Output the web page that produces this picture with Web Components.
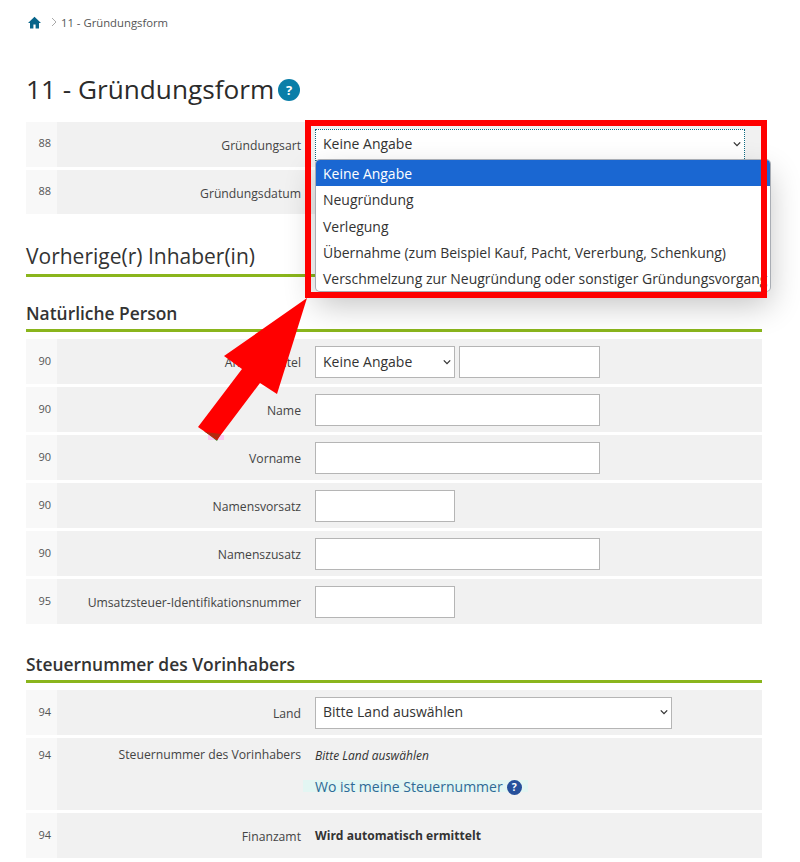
<!DOCTYPE html>
<html lang="de"><head><meta charset="utf-8"><title>Gründungsform</title>
<style>
html,body{margin:0;padding:0;background:#fff}
body{font-family:"Open Sans",sans-serif;color:#333;width:800px;height:862px;overflow:hidden;position:relative}
</style></head><body>
<x-page>
  <x-crumbs>11 - Gründungsform</x-crumbs>
  <x-title>11 - Gründungsform</x-title>
  <x-row num="88" label="Gründungsart" first><x-select w="430" focus up>Keine Angabe</x-select></x-row>
  <x-row num="88" label="Gründungsdatum" h="44" first></x-row>
  <x-heading kind="major">Vorherige(r) Inhaber(in)</x-heading>
  <x-heading kind="sub">Natürliche Person</x-heading>
  <x-row num="90" label="Anrede / Titel"><x-select w="140">Keine Angabe</x-select><x-field w="141"></x-field></x-row>
  <x-row num="90" label="Name"><x-field w="285"></x-field></x-row>
  <x-row num="90" label="Vorname"><x-field w="285"></x-field></x-row>
  <x-row num="90" label="Namensvorsatz"><x-field w="140"></x-field></x-row>
  <x-row num="90" label="Namenszusatz"><x-field w="285"></x-field></x-row>
  <x-row num="95" label="Umsatzsteuer-Identifikationsnummer"><x-field w="140"></x-field></x-row>
  <x-heading kind="tax">Steuernummer des Vorinhabers</x-heading>
  <x-row num="94" label="Land"><x-select w="357" up>Bitte Land auswählen</x-select></x-row>
  <x-row num="94" label="Steuernummer des Vorinhabers" h="72" top><x-tax-help></x-tax-help></x-row>
  <x-row num="94" label="Finanzamt"><b style="font-size:12.1px;font-weight:700;color:#333">Wird automatisch ermittelt</b></x-row>
</x-page>
<x-dropdown>
  <x-option selected>Keine Angabe</x-option>
  <x-option>Neugründung</x-option>
  <x-option>Verlegung</x-option>
  <x-option>Übernahme (zum Beispiel Kauf, Pacht, Vererbung, Schenkung)</x-option>
  <x-option>Verschmelzung zur Neugründung oder sonstiger Gründungsvorgang</x-option>
</x-dropdown>
<x-callout></x-callout>
<script>
function def(name, css, html, init){
  customElements.define(name, class extends HTMLElement{
    connectedCallback(){
      if(this.shadowRoot) return;
      const r=this.attachShadow({mode:'open'});
      r.innerHTML='<style>'+css+'</style>'+(typeof html==='function'?html(this):html);
      if(init) init(this,r);
    }
  });
}
const chevron='<svg width="8" height="8" viewBox="0 0 8 8"><path d="M.8 2.4 4 5.6l3.2-3.2" fill="none" stroke="#333" stroke-width="1.3"/></svg>';
def('x-page',':host{display:block;padding:0 38px 0 26px;box-sizing:border-box;width:800px}','<slot></slot>');
def('x-crumbs',
 ':host{display:flex;align-items:center;height:16px;margin-top:15px;font-size:11.3px;color:#555;position:relative;top:-1px}svg{display:block}.h{margin:0 10px 0 2px}.s{margin-right:4px}',
 '<svg class="h" width="13" height="13" viewBox="0 0 13 13"><path d="M6.5 .8 0 7h2v5.4h3.4V8.4h2.2v4H11V7h2z" fill="#06648a"/></svg><svg class="s" width="6" height="10" viewBox="0 0 6 10"><path d="M1 1l4 4-4 4" fill="none" stroke="#aaa"/></svg><slot></slot>');
def('x-title',
 ':host{display:flex;align-items:center;gap:4px;margin-top:38px;height:40px;font-size:26.2px;font-weight:400;color:#2b2b2b;margin-bottom:13px}.q{width:22px;height:22px;border-radius:50%;background:#0a7ea8;color:#fff;font-size:13px;font-weight:700;display:flex;align-items:center;justify-content:center;margin-top:2px}',
 '<slot></slot><span class="q">?</span>');
def('x-row',
 ':host{display:grid;grid-template-columns:31px 244px 1fr;height:45px;margin-bottom:3px;background:#f1f1f1;font-size:12.2px;color:#444}.n{background:#f8f8f8;font-size:11px;color:#555;padding-left:12.5px;display:flex;align-items:center;padding-bottom:2px;box-sizing:border-box}:host([first]) .n{padding-bottom:4px}.l{display:flex;align-items:center;justify-content:flex-end;text-align:right;white-space:nowrap;padding-top:2px;box-sizing:border-box}.c{display:flex;align-items:center;gap:4px;padding-left:14px}:host([top]) .n{align-items:flex-start;padding-top:9px}:host([top]) .l{align-items:flex-start;padding-top:8px}:host([top]) .c{align-items:flex-start}',
 e=>'<div class="n">'+e.getAttribute('num')+'</div><div class="l">'+e.getAttribute('label')+'</div><div class="c"><slot></slot></div>',
 (e)=>{ if(e.getAttribute('h')) e.style.height=e.getAttribute('h')+'px'; });
def('x-select',
 ':host{display:flex;align-items:center;justify-content:space-between;box-sizing:border-box;height:32px;background:#fff;border:1px solid #b5b5b5;padding:0 3px 0 7px;font-size:14px;color:#333}:host([focus]){border:1px dotted #0d6a80}:host([up]){padding-bottom:2px}',
 '<slot></slot>'+chevron,
 (e)=>{e.style.width=e.getAttribute('w')+'px'});
def('x-field',
 ':host{display:block;box-sizing:border-box;height:32px;background:#fff;border:1px solid #b5b5b5}','',
 (e)=>{e.style.width=e.getAttribute('w')+'px'});
def('x-heading',
 ':host{display:block;box-sizing:content-box;border-bottom:3px solid #8ab51c;color:#333}:host([kind=major]){font-size:21px;height:40px;line-height:44px;margin-top:20px;margin-bottom:0}:host([kind=sub]){font-size:17.4px;font-weight:600;height:28px;line-height:24px;margin-top:24px;margin-bottom:7px}:host([kind=tax]){font-size:17.4px;font-weight:600;height:30px;line-height:28px;margin-top:26px;margin-bottom:7px}',
 '<slot></slot>');
def('x-tax-help',
 ':host{display:block;padding-top:10px;font-size:12px}i{display:block;color:#333;line-height:16px}a{position:relative;display:flex;width:max-content;align-items:center;gap:4px;margin-top:13px;font-size:14px;color:#2f6a96;text-decoration:none;line-height:20px}a::before{content:"";position:absolute;left:-12px;right:-6px;top:3px;bottom:5px;background:#e3f6f3;z-index:0}a span{position:relative}.q{width:15px;height:15px;border-radius:50%;background:#27509b;color:#fff;font-size:10.5px;font-weight:700;display:flex;align-items:center;justify-content:center}',
 '<i>Bitte Land auswählen</i><a><span>Wo ist meine Steuernummer</span> <span class="q">?</span></a>');
def('x-dropdown',
 ':host{position:absolute;left:316px;top:160px;width:454px;height:131px;box-sizing:border-box;background:#fff;border-radius:4px;box-shadow:0 0 0 1px #a9adb4,0 14px 32px rgba(0,0,0,.24);font-size:13.96px;color:#333}',
 '<slot></slot>');
def('x-option',
 ':host{display:block;height:26.3px;line-height:28px;padding-left:7px;white-space:nowrap}:host([selected]){background:#1a67d2;color:#fff;border-radius:4px 4px 0 0}',
 '<slot></slot>');
def('x-callout',
 ':host{position:absolute;left:0;top:0;width:800px;height:862px;pointer-events:none}.f{position:absolute;left:305px;top:120px;width:462px;height:178px;box-sizing:border-box;border:6.5px solid #f00}svg{position:absolute;left:0;top:0}',
 '<div class="f"></div><svg width="800" height="862" viewBox="0 0 800 862"><polygon points="208,435 224,435 224,440 208,440" fill="#fbc8f0"/><polygon points="204,431 222,431 217,441" fill="#3f7a20"/><polygon points="198,427 242,369 224,356 307,298 277,394 260,383 217,440" fill="#f00"/><polygon points="205,432 221,434 217,439" fill="#b02a10"/></svg>');
</script>
</body></html>
